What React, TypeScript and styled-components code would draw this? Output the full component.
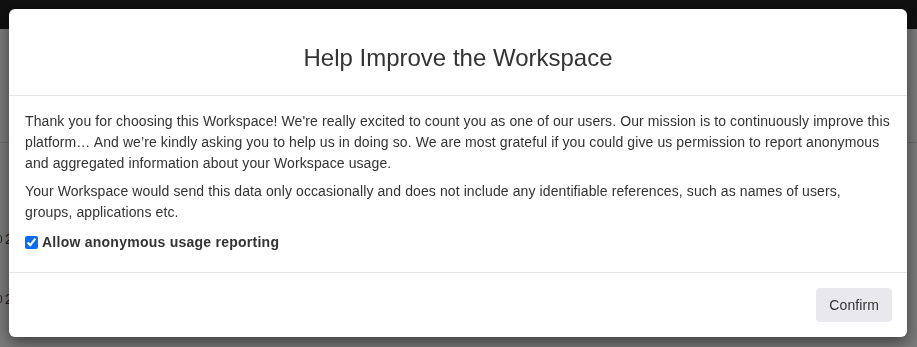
import React from "react";
import styled, { createGlobalStyle } from "styled-components";

const GlobalStyle = createGlobalStyle`
  html, body { margin: 0; padding: 0; }
  body {
    background: #ffffff;
    font-family: "Liberation Sans", Arial, Helvetica, sans-serif;
    font-size: 14px;
    color: #333333;
    overflow: hidden;
  }
  * { box-sizing: border-box; }
`;

const Page = styled.div`
  width: 917px;
  height: 347px;
  overflow: hidden;
`;

const NavBar = styled.div`
  height: 29px;
  background: #222222;
`;

const Content = styled.div`
  padding-top: 113px;
`;

const TableHead = styled.div`
  border-bottom: 1px solid #dddddd;
  height: 1px;
`;

const Row = styled.div<{ $top: number }>`
  display: flex;
  align-items: center;
  gap: 3px;
  height: 20px;
  margin-top: ${(p) => p.$top}px;
  font-size: 14px;
  color: #333;
`;

const RowBox = styled.span`
  display: inline-block;
  width: 8px;
  height: 8px;
  margin-left: -6px;
  border: 1px solid #555;
  border-radius: 2px;
`;

const Backdrop = styled.div`
  position: fixed;
  inset: 0;
  background: rgba(0, 0, 0, 0.52);
`;

const Modal = styled.div`
  position: fixed;
  left: 9px;
  top: 9px;
  width: 898px;
  background: #ffffff;
  border-radius: 6px;
  box-shadow: 0 5px 15px rgba(0, 0, 0, 0.5);
  display: flex;
  flex-direction: column;
`;

const Header = styled.div`
  padding: 31px 16px 19px;
  border-bottom: 1px solid #e5e5e5;
  text-align: center;
`;

const Title = styled.h4`
  margin: 0;
  font-size: 24px;
  font-weight: 400;
  line-height: 36px;
  color: #333333;
`;

const Body = styled.div`
  padding: 15px 16px 19px;
`;

const Paragraph = styled.p`
  margin: 0 0 7px;
  font-size: 14px;
  line-height: 21px;
  letter-spacing: 0.1px;
  color: #333333;
`;

const CheckLabel = styled.label`
  display: flex;
  align-items: center;
  gap: 4px;
  margin-top: 9px;
  font-size: 14px;
  font-weight: 700;
  line-height: 21px;
  letter-spacing: 0.25px;
  color: #333333;
`;

const Check = styled.input`
  width: 13px;
  height: 13px;
  margin: 0;
  accent-color: #0b6cf0;
`;

const Footer = styled.div`
  display: flex;
  justify-content: flex-end;
  padding: 15px 15px 15px;
  border-top: 1px solid #e5e5e5;
`;

const Button = styled.button`
  height: 34px;
  padding: 0 13px;
  border: none;
  border-radius: 4px;
  background: #e9e9ed;
  font-family: "Liberation Sans", Arial, sans-serif;
  font-size: 14px;
  letter-spacing: 0.1px;
  color: #333333;
  cursor: pointer;
`;

export default function App() {
  return (
    <>
      <GlobalStyle />
      <Page>
        <NavBar />
        <Content>
          <TableHead />
          <Row $top={86}>
            <RowBox />
            <span>2</span>
          </Row>
          <Row $top={40}>
            <RowBox />
            <span>2</span>
          </Row>
        </Content>
      </Page>
      <Backdrop />
      <Modal role="dialog" aria-modal="true">
        <Header>
          <Title>Help Improve the Workspace</Title>
        </Header>
        <Body>
          <Paragraph>
            Thank you for choosing this Workspace! We're really excited to count you as one of our users. Our mission is to continuously improve this platform… And we’re kindly asking you to help us in doing so. We are most grateful if you could give us permission to report anonymous and aggregated information about your Workspace usage.
          </Paragraph>
          <Paragraph>
            Your Workspace would send this data only occasionally and does not include any identifiable references, such as names of users, groups, applications etc.
          </Paragraph>
          <CheckLabel>
            <Check type="checkbox" defaultChecked />
            Allow anonymous usage reporting
          </CheckLabel>
        </Body>
        <Footer>
          <Button>Confirm</Button>
        </Footer>
      </Modal>
    </>
  );
}
